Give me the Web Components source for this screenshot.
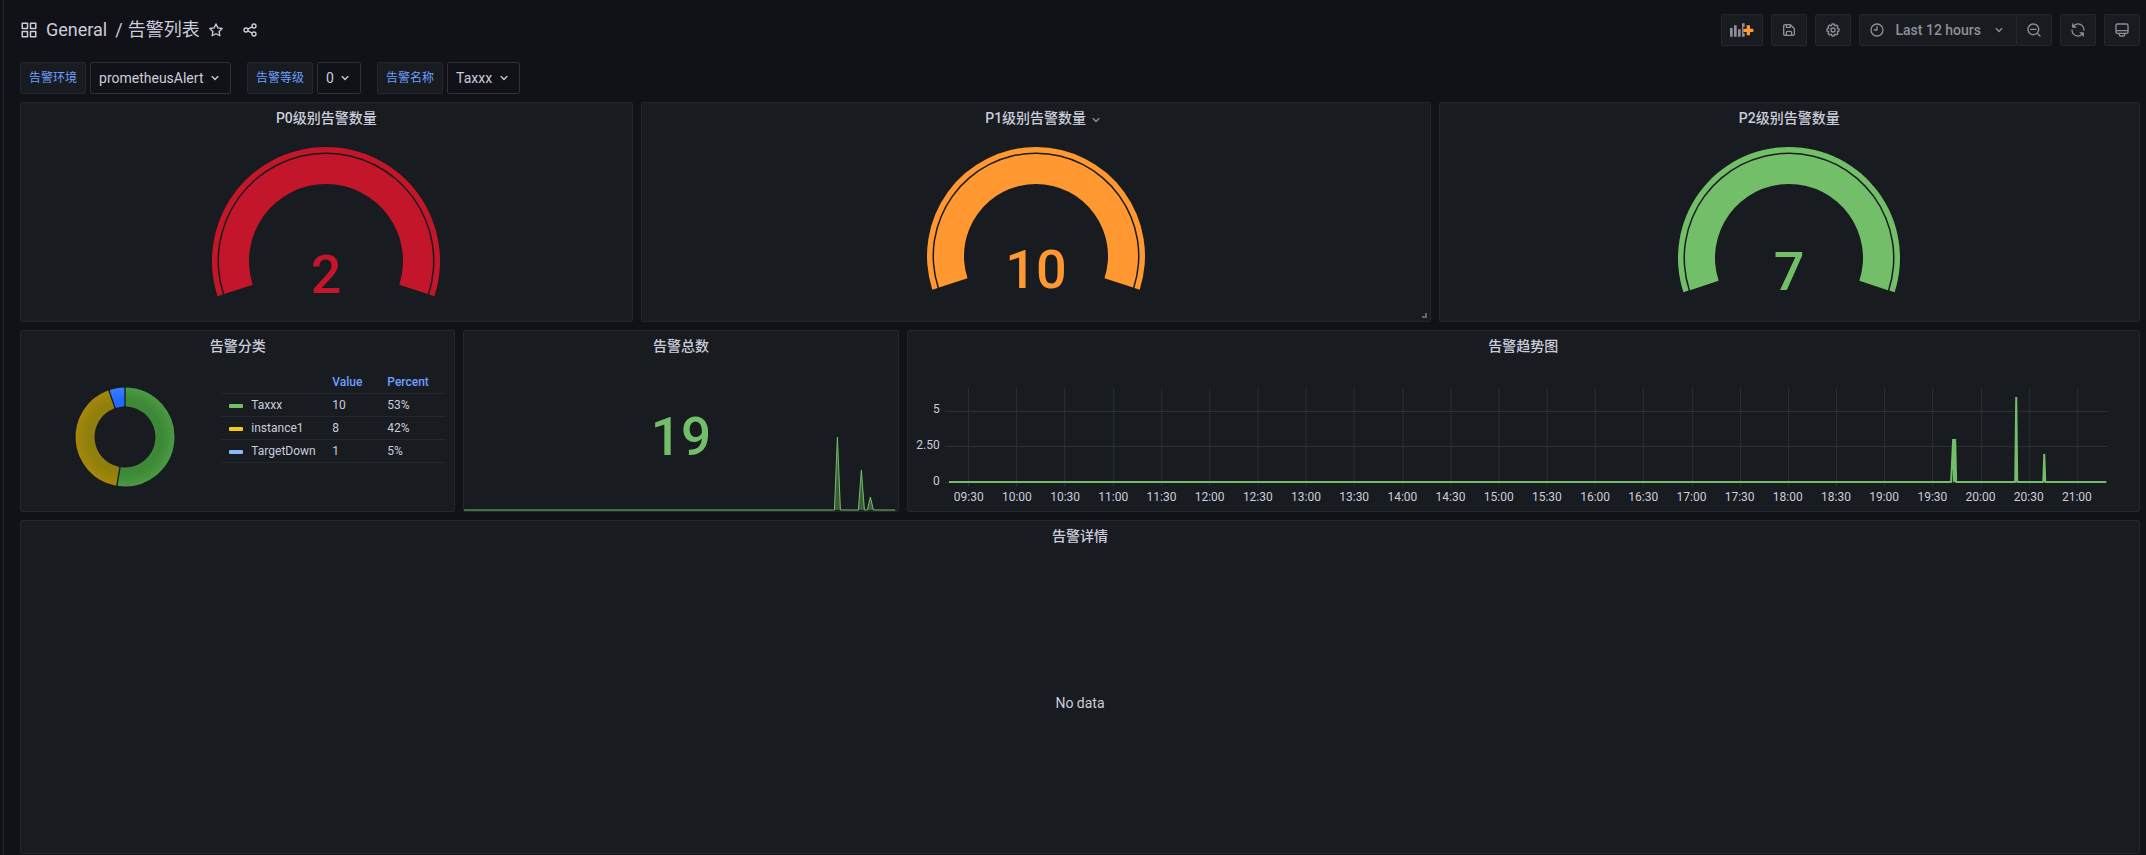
<!DOCTYPE html>
<html lang="zh-CN">
<head>
<meta charset="utf-8">
<title>告警列表</title>
<style>
  html { background: #111217; }
  body { margin: 0; color: #ccccdc; font: 14px/22px Roboto, "Noto Sans CJK SC", sans-serif; }
</style>
</head>
<body>
<alert-dashboard></alert-dashboard>
<script>
const define = (name, html, setup) => {
  const tpl = document.createElement('template');
  tpl.innerHTML = html;
  customElements.define(name, class extends HTMLElement {
    connectedCallback() {
      if (this.shadowRoot) return;
      const root = this.attachShadow({ mode: 'open' });
      root.append(tpl.content.cloneNode(true));
      if (setup) setup(this, root);
    }
  });
};

const ICONS = {
  apps: '<path d="M10 13H3a1 1 0 0 0-1 1v7a1 1 0 0 0 1 1h7a1 1 0 0 0 1-1v-7a1 1 0 0 0-1-1zm-1 7H4v-5h5zM21 2h-7a1 1 0 0 0-1 1v7a1 1 0 0 0 1 1h7a1 1 0 0 0 1-1V3a1 1 0 0 0-1-1zm-1 7h-5V4h5zm1 4h-7a1 1 0 0 0-1 1v7a1 1 0 0 0 1 1h7a1 1 0 0 0 1-1v-7a1 1 0 0 0-1-1zm-1 7h-5v-5h5zM10 2H3a1 1 0 0 0-1 1v7a1 1 0 0 0 1 1h7a1 1 0 0 0 1-1V3a1 1 0 0 0-1-1zM9 9H4V4h5z"/>',
  star: '<path fill="none" stroke="currentColor" stroke-width="2" stroke-linejoin="round" d="M12 2.9l2.85 5.85 6.4.95-4.65 4.5 1.1 6.4L12 17.6l-5.7 3 1.1-6.4L2.75 9.7l6.4-.95z"/>',
  share: '<g fill="none" stroke="currentColor" stroke-width="2"><circle cx="18" cy="6" r="3"/><circle cx="18" cy="18" r="3"/><circle cx="6" cy="12" r="3"/><path d="M8.7 10.7l6.6-3.4M8.7 13.3l6.6 3.4"/></g>',
  down: '<path d="M17 9.17a1 1 0 0 0-1.41 0L12 12.71 8.46 9.17a1 1 0 1 0-1.41 1.42l4.24 4.24a1 1 0 0 0 1.42 0L17 10.59a1 1 0 0 0 0-1.42z"/>',
  panel: '<path d="M0 9h4v13H0zM6 5h4v17H6zM12 11h4v11h-4zM18 2h4v5h-2v10h2v5h-4z"/><path fill="#ff9830" d="M25 5h5v5h5v5h-5v5h-5v-5h-5v-5h5z"/>',
  save: '<path d="M20.71 9.29l-6-6a1 1 0 0 0-.32-.21A1.09 1.09 0 0 0 14 3H6a3 3 0 0 0-3 3v12a3 3 0 0 0 3 3h12a3 3 0 0 0 3-3v-8a1 1 0 0 0-.29-.71zM9 5h4v2H9zm6 14H9v-3a1 1 0 0 1 1-1h4a1 1 0 0 1 1 1zm4-1a1 1 0 0 1-1 1h-1v-3a3 3 0 0 0-3-3h-4a3 3 0 0 0-3 3v3H6a1 1 0 0 1-1-1V6a1 1 0 0 1 1-1h1v3a1 1 0 0 0 1 1h6a1 1 0 0 0 1-1V6.41l4 4z"/>',
  cog: '<path d="M21.32 9.55l-1.89-.63.89-1.78A1 1 0 0 0 20.13 6L18 3.87a1 1 0 0 0-1.15-.19l-1.78.89-.63-1.89A1 1 0 0 0 13.5 2h-3a1 1 0 0 0-.95.68l-.63 1.89-1.78-.89A1 1 0 0 0 6 3.87L3.87 6a1 1 0 0 0-.19 1.15l.89 1.78-1.89.63a1 1 0 0 0-.68.94v3a1 1 0 0 0 .68.95l1.89.63-.89 1.78A1 1 0 0 0 3.87 18L6 20.13a1 1 0 0 0 1.15.19l1.78-.89.63 1.89a1 1 0 0 0 .95.68h3a1 1 0 0 0 .95-.68l.63-1.89 1.78.89a1 1 0 0 0 1.13-.19L20.13 18a1 1 0 0 0 .19-1.15l-.89-1.78 1.89-.63a1 1 0 0 0 .68-.94v-3a1 1 0 0 0-.68-.95zM20 12.78l-1.2.4A2 2 0 0 0 17.64 16l.57 1.14-1.1 1.1-1.11-.6a2 2 0 0 0-2.79 1.16l-.4 1.2h-1.59l-.4-1.2A2 2 0 0 0 8 17.64l-1.14.57-1.1-1.1.6-1.11a2 2 0 0 0-1.16-2.82l-1.2-.4v-1.56l1.2-.4A2 2 0 0 0 6.36 8l-.57-1.11 1.1-1.1L8 6.36a2 2 0 0 0 2.82-1.16l.4-1.2h1.56l.4 1.2A2 2 0 0 0 16 6.36l1.14-.57 1.1 1.1-.6 1.11a2 2 0 0 0 1.16 2.79l1.2.4zM12 8a4 4 0 1 0 4 4 4 4 0 0 0-4-4zm0 6a2 2 0 1 1 2-2 2 2 0 0 1-2 2z"/>',
  clock: '<path d="M12 2a10 10 0 1 0 10 10A10 10 0 0 0 12 2zm0 18a8 8 0 1 1 8-8 8 8 0 0 1-8 8zm0-14a1 1 0 0 0-1 1v4H8a1 1 0 0 0 0 2h4a1 1 0 0 0 1-1V7a1 1 0 0 0-1-1z"/>',
  zoom: '<path d="M21.71 20.29L18 16.61A9 9 0 1 0 16.61 18l3.68 3.68a1 1 0 0 0 1.42 0 1 1 0 0 0 0-1.39zM11 18a7 7 0 1 1 7-7 7 7 0 0 1-7 7zm4-8H7a1 1 0 0 0 0 2h8a1 1 0 0 0 0-2z"/>',
  sync: '<path d="M19.91 15.51h-4.53a1 1 0 0 0 0 2h2.4A8 8 0 0 1 4 12a1 1 0 0 0-2 0 10 10 0 0 0 16.88 7.23V21a1 1 0 0 0 2 0v-4.5a1 1 0 0 0-.97-.99zM12 2a10 10 0 0 0-6.88 2.77V3a1 1 0 0 0-2 0v4.5a1 1 0 0 0 1 1h4.5a1 1 0 0 0 0-2h-2.4A8 8 0 0 1 20 12a1 1 0 0 0 2 0A10 10 0 0 0 12 2z"/>',
  monitor: '<path d="M19 2H5a3 3 0 0 0-3 3v10a3 3 0 0 0 3 3h2v1a3 3 0 0 0 3 3h4a3 3 0 0 0 3-3v-1h2a3 3 0 0 0 3-3V5a3 3 0 0 0-3-3zm-4 17a1 1 0 0 1-1 1h-4a1 1 0 0 1-1-1v-1h6zm5-4a1 1 0 0 1-1 1H5a1 1 0 0 1-1-1v-1h16zm0-3H4V5a1 1 0 0 1 1-1h14a1 1 0 0 1 1 1z"/>'
};

define('ui-icon', `
<style>
  :host { display: inline-flex; flex: none; }
  svg { display: block; height: var(--icon-size, 16px); fill: currentColor; }
</style>`, (el, root) => {
  const wide = el.getAttribute('name') === 'panel';
  root.innerHTML += `<svg viewBox="0 0 ${wide ? 36 : 24} 24" aria-hidden="true">${ICONS[el.getAttribute('name')]}</svg>`;
});

define('tool-button', `
<style>
  :host { display: block; }
  button { display: flex; align-items: center; gap: 10px; box-sizing: border-box; height: 32px; padding: 0 9px;
    border: 1px solid #25272c; border-radius: 2px; background: #181b1f; color: #8e8f9a;
    font: 500 14px/22px Roboto, sans-serif; cursor: pointer; }
  :host([joined]) button { margin-left: -1px; }
  :host([compact]) button { padding: 0 8px; }
</style>
<button type="button"><slot></slot></button>`, (el, root) => {
  root.querySelector('button').setAttribute('aria-label', el.getAttribute('label'));
});

define('nav-bar', `
<style>
  :host { display: flex; justify-content: space-between; align-items: center; height: 32px; }
  nav, .tools, .range { display: flex; align-items: center; }
  nav { gap: 8px; font-size: 18px; line-height: 24px; }
  nav > ui-icon { --icon-size: 18px; }
  a { color: inherit; text-decoration: none; }
  .path { display: flex; gap: 5px; }
  .icon { display: flex; padding: 0; border: 0; background: none; color: inherit; }
  .share { margin-left: 10px; }
  .tools { gap: 8px; }
</style>
<nav>
  <ui-icon name="apps"></ui-icon>
  <a href="#general">General</a>
  <span class="path"><span>/</span><a href="#list">告警列表</a></span>
  <button class="icon" type="button" aria-label="Star"><ui-icon name="star"></ui-icon></button>
  <button class="icon share" type="button" aria-label="Share"><ui-icon name="share"></ui-icon></button>
</nav>
<div class="tools">
  <tool-button compact label="Add panel"><ui-icon name="panel"></ui-icon></tool-button>
  <tool-button label="Save"><ui-icon name="save"></ui-icon></tool-button>
  <tool-button label="Settings"><ui-icon name="cog"></ui-icon></tool-button>
  <div class="range">
    <tool-button label="Last 12 hours"><ui-icon name="clock"></ui-icon>Last 12 hours<ui-icon name="down"></ui-icon></tool-button>
    <tool-button joined label="Zoom out"><ui-icon name="zoom"></ui-icon></tool-button>
  </div>
  <tool-button label="Refresh"><ui-icon name="sync"></ui-icon></tool-button>
  <tool-button label="Kiosk mode"><ui-icon name="monitor"></ui-icon></tool-button>
</div>`);

define('variable-picker', `
<style>
  :host { display: flex; gap: 4px; }
  label { box-sizing: border-box; height: 32px; padding: 0 8px; border: 1px solid #25272c; border-radius: 2px;
    background: #181b1f; color: #6e9fff; font-size: 12px; line-height: 30px; }
  .box { position: relative; display: flex; }
  select { appearance: none; box-sizing: border-box; height: 32px; padding: 0 26px 0 8px; border: 1px solid #2e3036;
    border-radius: 2px; background: #111217; color: #ccccdc; font: 14px/22px Roboto, sans-serif; }
  ui-icon { position: absolute; right: 8px; top: 8px; pointer-events: none; }
</style>
<label for="v"></label>
<div class="box"><select id="v"><option></option></select><ui-icon name="down"></ui-icon></div>`, (el, root) => {
  root.querySelector('label').textContent = el.getAttribute('label');
  root.querySelector('option').textContent = el.getAttribute('value');
});

define('dash-panel', `
<style>
  :host { position: relative; display: flex; flex-direction: column; box-sizing: border-box; min-width: 0;
    border: 1px solid #25272c; border-radius: 2px; background: #181b1f; }
  h2 { flex: none; margin: 0; height: 32px; text-align: center; font-size: 14px; font-weight: 500; line-height: 30px; }
  span { position: relative; }
  .menu { display: none; position: absolute; left: 100%; top: 2px; padding-left: 2px; color: #8e8f9a; }
  .grip { display: none; position: absolute; right: 3px; bottom: 3px; width: 3px; height: 3px;
    border: solid #63656c; border-width: 0 2px 2px 0; }
  :host([active]) .menu, :host([active]) .grip { display: block; }
  .body { display: flex; flex: 1; min-height: 0; flex-direction: column; }
</style>
<h2><span><b style="font-weight:inherit"></b><ui-icon class="menu" name="down"></ui-icon></span></h2>
<div class="body"><slot></slot></div>
<i class="grip"></i>`, (el, root) => {
  root.querySelector('b').textContent = el.getAttribute('heading');
});

const polar = (cx, cy, r, deg) => {
  const a = deg * Math.PI / 180;
  return `${(cx + r * Math.sin(a)).toFixed(2)} ${(cy - r * Math.cos(a)).toFixed(2)}`;
};
const ring = (cx, cy, ro, ri, a, b, padO = 0, padI = 0) => {
  const big = b - a > 180 ? 1 : 0;
  return `M${polar(cx, cy, ro, a + padO)}A${ro} ${ro} 0 ${big} 1 ${polar(cx, cy, ro, b - padO)}` +
    `L${polar(cx, cy, ri, b - padI)}A${ri} ${ri} 0 ${big} 0 ${polar(cx, cy, ri, a + padI)}Z`;
};

define('gauge-chart', `
<style>
  :host { display: flex; justify-content: center; padding-top: 12px; }
  svg { display: block; }
  text { font: 500 54px Roboto, sans-serif; text-anchor: middle; }
</style>`, (el, root) => {
  const r = +el.getAttribute('radius');
  const w = 240, cx = w / 2;
  root.innerHTML += `<svg width="${w}" height="160" fill="${el.getAttribute('color')}">
    <path d="${ring(cx, r, r, r - 5.5, -108, 108)}"/>
    <path d="${ring(cx, r, r - 7, r - 37, -108, 108)}"/>
    <text x="${cx}" y="${r + 32}">${el.getAttribute('value')}</text></svg>`;
});

define('pie-chart', `
<style>
  :host { display: flex; justify-content: space-between; padding: 8px 8px 0 40px; }
  svg { display: block; flex: none; margin-top: 16px; }
  table { width: 225px; border-collapse: collapse; table-layout: fixed; font-size: 12px; line-height: 22px; align-self: flex-start; }
  th, td { padding: 0; height: 22px; text-align: left; border-bottom: 1px solid #25272c; white-space: nowrap; }
  thead th { color: #6e9fff; font-weight: 500; }
  tbody th { font-weight: 400; padding-left: 8px; }
  .n { width: 111px; } .v { width: 55px; }
  i { display: inline-block; width: 14px; height: 4px; margin-right: 8px; border-radius: 1px; vertical-align: middle; }
  .g { background: #73bf69; } .y { background: #f2cc0c; } .b { background: #8ab8ff; }
</style>
<svg width="120" height="100" viewBox="0 0 120 100">
  <defs>
    <radialGradient id="g" gradientUnits="userSpaceOnUse" cx="64" cy="50" r="50"><stop offset=".75" stop-color="#3d8937"/><stop offset="1" stop-color="#4c9b43"/></radialGradient>
    <radialGradient id="y" gradientUnits="userSpaceOnUse" cx="64" cy="50" r="50"><stop offset=".75" stop-color="#90800b"/><stop offset="1" stop-color="#a8870d"/></radialGradient>
    <radialGradient id="b" gradientUnits="userSpaceOnUse" cx="64" cy="50" r="50"><stop offset=".75" stop-color="#2369ff"/><stop offset="1" stop-color="#3a80ff"/></radialGradient>
  </defs>
</svg>
<table>
  <thead><tr><th class="n"></th><th class="v" scope="col">Value</th><th scope="col">Percent</th></tr></thead>
  <tbody>
    <tr><th scope="row"><i class="g"></i>Taxxx</th><td>10</td><td>53%</td></tr>
    <tr><th scope="row"><i class="y"></i>instance1</th><td>8</td><td>42%</td></tr>
    <tr><th scope="row"><i class="b"></i>TargetDown</th><td>1</td><td>5%</td></tr>
  </tbody>
</table>`, (el, root) => {
  const svg = root.querySelector('svg');
  let at = 0;
  [[10, 'g'], [8, 'y'], [1, 'b']].forEach(([n, id]) => {
    const end = at + n / 19 * 360;
    svg.innerHTML += `<path fill="url(#${id})" stroke="url(#${id})" stroke-linejoin="round" stroke-width="2" d="${ring(64, 50, 48.5, 31.5, at, end, 2, 3)}"/>`;
    at = end;
  });
});

define('stat-chart', `
<style>
  :host { position: relative; display: flex; flex: 1; align-items: center; justify-content: center; }
  strong { color: #73bf69; font-size: 53px; font-weight: 500; line-height: 64px; }
  svg { position: absolute; left: 0; bottom: 0; width: 100%; height: 75px; }
  path { vector-effect: non-scaling-stroke; }
</style>
<strong>19</strong>
<svg viewBox="0 0 434 75" preserveAspectRatio="none">
  <path fill="#73bf69" fill-opacity=".4" d="M371 74L374 1L377 74zM395 74L398 34L401 74zM404 74L407 61L410 74z"/>
  <path fill="none" stroke="#73bf69" d="M0 74H371L374 1L377 74H395L398 34L401 74H404L407 61L410 74H432"/>
</svg>`);

define('trend-chart', `
<style>
  :host { display: grid; grid-template-columns: 32px 1fr; column-gap: 5px; padding: 25px 32px 0 0; font-size: 12px; }
  .y { display: flex; flex-direction: column; align-items: flex-end; justify-content: space-between; height: 84px; padding-top: 15px; line-height: 12px; }
  .plot { display: block; width: 100%; height: 98px; }
  path { vector-effect: non-scaling-stroke; }
  .x { grid-column: 2; display: grid; grid-template-columns: repeat(24, 1fr); margin-right: 6px; line-height: 20px; text-align: center; white-space: nowrap; }
</style>
<div class="y"><span>5</span><span>2.50</span><span>0</span></div>
<svg class="plot" viewBox="0 0 1161 98" preserveAspectRatio="none">
  <path class="grid" fill="none" stroke="#2c3033"/>
  <path fill="none" stroke="#73bf69" stroke-width="2" stroke-linejoin="bevel" d="M4 94H1005L1007 51L1008 94L1009 51L1010 94H1069L1070 9L1071 94H1097L1098 66L1099 94H1160"/>
</svg>
<div class="x"></div>`, (el, root) => {
  const grid = ['M0 23.5H1161M0 58.5H1161M0 94.5H1161'];
  const x = root.querySelector('.x');
  for (let i = 0; i < 24; i++) {
    grid.push(`M${Math.round(23 + i * 48.17) + 0.5} 0V98`);
    const min = 570 + i * 30;
    const s = document.createElement('span');
    s.textContent = `${String(Math.floor(min / 60)).padStart(2, '0')}:${min % 60 ? '30' : '00'}`;
    x.append(s);
  }
  root.querySelector('.grid').setAttribute('d', grid.join(''));
});

define('alert-dashboard', `
<style>
  :host { display: block; box-sizing: border-box; min-height: 100vh; margin-left: 3px; border-left: 1px solid #25272c; padding: 14px 6px 0 16px; }
  .vars { display: flex; gap: 16px; margin: 16px 0 8px; }
  main { display: grid; grid-template-columns: repeat(24, minmax(0, 1fr)); grid-template-rows: 220px 182px 334px; gap: 8px; }
  .c5 { grid-column: span 5; } .c7 { grid-column: span 7; } .c8 { grid-column: span 8; }
  .c9 { grid-column: span 9; } .c14 { grid-column: span 14; } .c24 { grid-column: span 24; }
  p { margin: auto; }
</style>
<nav-bar></nav-bar>
<div class="vars">
  <variable-picker label="告警环境" value="prometheusAlert"></variable-picker>
  <variable-picker label="告警等级" value="0"></variable-picker>
  <variable-picker label="告警名称" value="Taxxx"></variable-picker>
</div>
<main>
  <dash-panel class="c7" heading="P0级别告警数量"><gauge-chart radius="114" value="2" color="#c4162a"></gauge-chart></dash-panel>
  <dash-panel class="c9" active heading="P1级别告警数量"><gauge-chart radius="109" value="10" color="#ff9830"></gauge-chart></dash-panel>
  <dash-panel class="c8" heading="P2级别告警数量"><gauge-chart radius="111" value="7" color="#73bf69"></gauge-chart></dash-panel>
  <dash-panel class="c5" heading="告警分类"><pie-chart></pie-chart></dash-panel>
  <dash-panel class="c5" heading="告警总数"><stat-chart></stat-chart></dash-panel>
  <dash-panel class="c14" heading="告警趋势图"><trend-chart></trend-chart></dash-panel>
  <dash-panel class="c24" heading="告警详情"><p>No data</p></dash-panel>
</main>`);
</script>
</body>
</html>
